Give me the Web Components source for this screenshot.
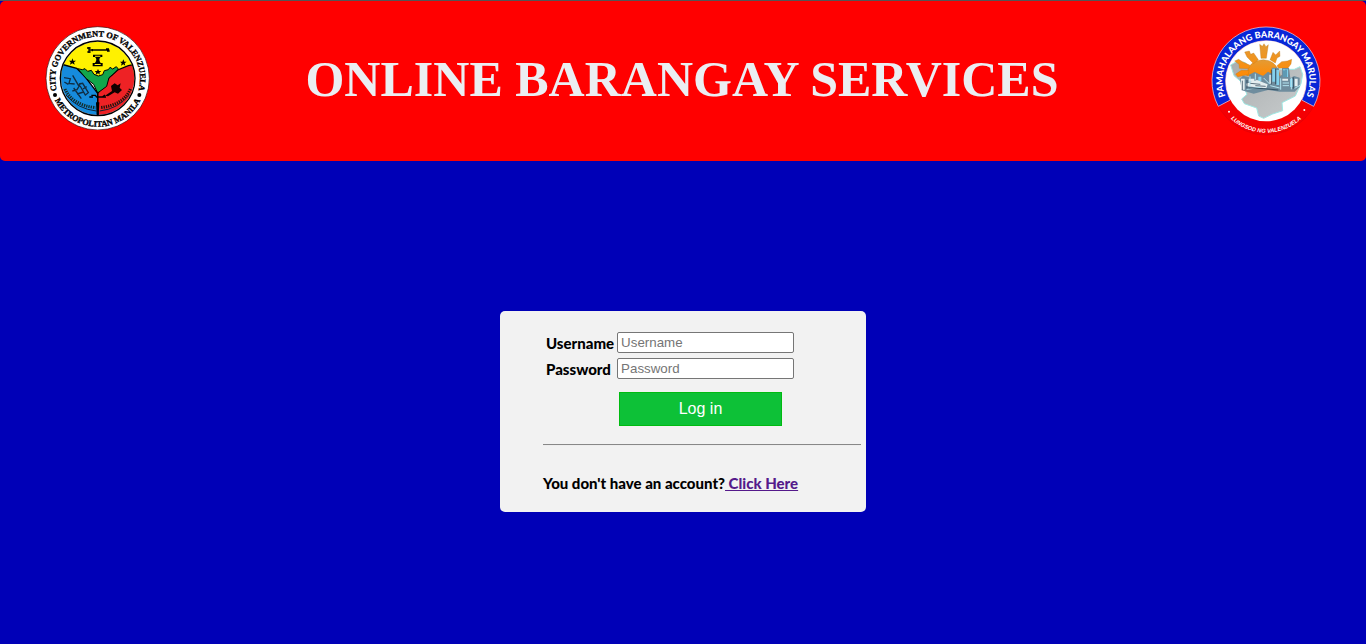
<!DOCTYPE html>
<html lang="en">
<head>
<meta charset="utf-8">
<meta name="viewport" content="width=device-width, initial-scale=1">
<title>Online Barangay Services</title>
<style>
body { margin: 0; min-height: 100vh; box-sizing: border-box; background: #0000b7; border-top: 1px solid #555; font-family: "Liberation Sans", Arial, sans-serif; }
</style>
</head>
<body>
<site-header>
  <city-seal slot="start"></city-seal>
  ONLINE BARANGAY SERVICES
  <barangay-seal slot="end"></barangay-seal>
</site-header>
<page-main>
  <login-card></login-card>
</page-main>

<template id="site-header">
<style>
:host { display: block; }
header { display: grid; grid-template-columns: 108px 1fr 110px; align-items: start; min-height: 160px; box-sizing: border-box; padding: 25px 45px; background: #f00; border-radius: 5px; }
h1 { margin: 25px 0 0; text-align: center; font: bold 50px/56px "Liberation Serif", "Times New Roman", serif; color: #ebeef2; }
.end { justify-self: end; }
</style>
<header>
  <div><slot name="start"></slot></div>
  <h1><slot></slot></h1>
  <div class="end"><slot name="end"></slot></div>
</header>
</template>

<template id="page-main">
<style>
:host { display: block; }
main { display: flex; justify-content: center; padding: 150px 16px 32px; }
</style>
<main><slot></slot></main>
</template>

<template id="login-card">
<style>
:host { display: block; width: 366px; max-width: 100%; }
form { padding: 18px 5px 18px 43px; background: #f2f2f2; border-radius: 5px; color: #000; font: 900 15px/22px Lato, "Liberation Sans", sans-serif; }
table { border-spacing: 2px; }
th, td { padding: 1px; text-align: left; height: 22px; }
td { vertical-align: top; }
th { width: 67px; padding-right: 0; font: inherit; }
input { display: block; box-sizing: border-box; width: 177px; height: 21px; padding: 1px 3px; font-family: "Liberation Sans", Arial, sans-serif; background: #fff; border: 1px solid #767676; border-radius: 2px; }
input::placeholder { color: #757575; }
button { display: block; width: 163px; height: 34px; margin: 9px 0 0 76px; padding: 0; background: #0dc137; border: 1px solid #0b1; color: #fff; font: 16px/20px "Liberation Sans", Arial, sans-serif; }
hr { margin: 18px 0 0; border: 0 solid #888; border-width: 1px 0; border-bottom-color: #eee; height: 0; }
p { margin: 26px 0 0; }
a { color: #551a8b; white-space: pre; }
</style>
<form>
  <table role="presentation">
    <tr><th><label for="user">Username</label></th><td><input id="user" type="text" placeholder="Username"></td></tr>
    <tr><th><label for="pass">Password</label></th><td><input id="pass" type="password" placeholder="Password"></td></tr>
  </table>
  <button type="submit">Log in</button>
  <hr>
  <p>You don't have an account?<a href="#register"> Click Here</a></p>
</form>
</template>

<template id="city-seal">
<style>
:host { display: block; width: 106px; height: 104px; }
svg { display: block; width: 100%; height: 100%; }
text { font: bold 25px "Liberation Serif", serif; fill: #000; stroke: #000; stroke-width: 1px; }
</style>
<svg viewBox="30 33 318 312" role="img" aria-label="City Government of Valenzuela seal">
  <defs>
    <path id="top" d="M66 227A127 127 0 1 1 310 227"/>
    <path id="bottom" d="M59 254A143 143 0 0 0 317 254"/>
    <clipPath id="disc"><circle cx="188" cy="190" r="110"/></clipPath>
  </defs>
  <circle cx="188" cy="190" r="155" fill="#fff" stroke="#300" stroke-width="2"/>
  <g clip-path="url(#disc)">
    <path fill="#fff100" d="M70 70H310V190H70Z"/>
    <path fill="#168bdc" stroke="#000" stroke-width="4" d="M60 145L88 150 125 160 150 185 188 235V310H60Z"/>
    <path fill="#ee2225" stroke="#000" stroke-width="4" d="M315 145L280 152 248 165 222 188 188 235V310H315Z"/>
    <path fill="#12a64b" stroke="#000" stroke-width="3" d="M128 161L142 164 150 161 158 169 169 166 177 178 190 183 203 179 208 167 220 164 225 157 233 162 244 155 250 162 235 177 222 188 215 214 188 234 176 208 154 191Z"/>
    <g fill="none" stroke="#102d43" stroke-width="4">
      <path d="M87 188L106 191 102 205 119 207M113 181L132 214M116 219L139 251M112 228L126 224 138 204M126 237L146 231M132 207L151 240 160 233 143 205 132 207M144 222L155 215M88 201L100 208"/>
    </g>
    <path fill="none" stroke="#142b25" stroke-width="9" stroke-dasharray="4 3" d="M90 222Q112 270 182 278"/>
    <path fill="none" stroke="#24120a" stroke-width="9" stroke-dasharray="4 3" d="M286 222Q266 270 195 278"/>
    <path fill="none" stroke="#123" stroke-width="3" d="M93 240Q128 282 184 288M283 240Q248 282 194 288"/>
    <path fill="#100" d="M239 205L248 211 257 205 254 218 261 225 249 236 239 232 219 244 210 242 231 228 228 213Z"/>
    <path fill="none" stroke="#000" stroke-width="4" d="M188 230V302M169 241H181L185 246H202L210 240M163 246H174M202 246H213"/>
    <path d="M183 262H193L191 302H185Z"/>
  </g>
  <circle cx="188" cy="190" r="112" fill="none" stroke="#000" stroke-width="4"/>
  <path fill="none" stroke="#000" stroke-width="4" d="M162 96V114M156 99H167M157 111H167M164 105H223M172 102V109M213 102H222M216 108H224"/>
  <path d="M174 119H202V126H197Q189 134 197 144H203V154H173V144H180Q188 134 180 126H174Z"/>
  <path fill="#fff100" d="M180 122H196V125H180ZM179 147H197V150H179Z"/>
  <path d="M112 130L115 137 123 137 117 142 119 149 112 145 105 149 107 142 102 137 110 137ZM265 133L268 140 275 140 269 145 271 152 265 148 258 152 260 145 255 140 262 140ZM189 162L192 168 199 168 193 173 195 179 189 175 182 179 184 173 179 168 186 168Z"/>
  <circle cx="60" cy="240" r="6"/><circle cx="313" cy="240" r="6"/>
  <text><textPath href="#top" startOffset="50%" text-anchor="middle">CITY GOVERNMENT OF VALENZUELA</textPath></text>
  <text><textPath href="#bottom" startOffset="50%" text-anchor="middle">METROPOLITAN MANILA</textPath></text>
</svg>
</template>

<template id="barangay-seal">
<style>
:host { display: block; width: 110px; height: 110px; }
svg { display: block; width: 100%; height: 100%; }
text { fill: #fff; }
.name { font: 900 27px Lato, "Liberation Sans", sans-serif; }
.city { font: italic bold 17px "Liberation Sans", sans-serif; }
</style>
<svg viewBox="32 32 330 330" role="img" aria-label="Pamahalaang Barangay Marulas seal">
  <defs>
    <path id="top" d="M87 266A130 130 0 1 1 307 266"/>
    <path id="bottom" d="M71 288A156 156 0 0 0 323 288"/>
    <linearGradient id="land" x2="1" y2="1"><stop stop-color="#a9adae"/><stop offset="1" stop-color="#c8cccd"/></linearGradient>
    <linearGradient id="sun" x2="0" y2="1"><stop stop-color="#e39b35"/><stop offset="1" stop-color="#ff8a05"/></linearGradient>
  </defs>
  <circle cx="197" cy="197" r="162" fill="#f40004" stroke="#d00008" stroke-width="1"/>
  <path fill="#0826d7" stroke="#f7dbe7" stroke-width="2" d="M54 273A162 162 0 1 1 340 273L304 254A121 121 0 1 0 90 254Z"/>
  <circle cx="197" cy="197" r="121" fill="#fff"/>
  <path fill="url(#land)" stroke="#9fe9e4" stroke-width="3" d="M91 149L112 137 135 142 154 162H282L299 154 307 177 302 205 285 242 245 262 247 286 217 296 190 309 175 302 169 278 132 265 124 251 140 237 122 199 101 181Z"/>
  <g fill="url(#sun)" stroke="#b97519" stroke-width="1">
    <path d="M139 181Q142 135 189 133Q229 134 240 181Z"/>
    <path d="M178 87L186 93 191 85 197 94 204 88 198 129H182ZM133 110L147 107 151 117 160 113 174 133 160 145 140 125ZM238 107L239 123 230 128 225 143 209 133 218 111 226 119ZM103 137L115 132 126 139 149 150 145 160 117 159 116 147ZM106 176L123 165 146 165 144 178 112 184ZM244 139L261 137 274 132 272 146 263 158 235 159 230 151Z"/>
  </g>
  <path fill="#6f8d9e" d="M119 190L128 181 146 186V178L163 170 188 182 203 169 214 175V157H235L238 183 245 178V158H266L270 188 281 182 298 187V215L283 229H238L203 224 160 235 124 225Z"/>
  <path fill="#82d0ec" d="M216 160H225V199H216ZM228 164H236V209H228ZM248 162H263V185H248ZM174 184H183V198H174ZM269 190H277V215H269Z"/>
  <path fill="#e4eef0" d="M122 190H133V223H122ZM145 190H162V199H145ZM137 205L170 194 202 207 198 219 139 213ZM246 190H263V196H246ZM283 190H292V213H283ZM207 178H213V205H207Z"/>
  <path fill="none" stroke="#b5e5f2" stroke-width="3" d="M149 183V214M165 175V193M190 188L208 206M241 189V223M210 211L238 218M247 203H266M247 211H266M273 187V222M139 222L182 216M283 219L299 210"/>
  <path fill="none" stroke="#162f42" stroke-width="2" d="M126 196V224M140 194V220M213 163V207M226 160V207M251 165V185M257 163V185M279 186V220M144 218L190 220 234 224M150 204L180 207M165 211L196 213"/>
  <circle cx="86" cy="289" r="3" fill="#fff"/><circle cx="312" cy="284" r="3" fill="#fff"/>
  <text class="name"><textPath href="#top" startOffset="50%" text-anchor="middle">PAMAHALAANG BARANGAY MARULAS</textPath></text>
  <text class="city"><textPath href="#bottom" startOffset="50%" text-anchor="middle">LUNGSOD NG VALENZUELA</textPath></text>
</svg>
</template>

<script>
class TemplateElement extends HTMLElement {
  constructor() {
    super();
    const template = document.getElementById(this.localName);
    this.attachShadow({ mode: "open" }).append(template.content.cloneNode(true));
  }
}
customElements.define("site-header", class SiteHeader extends TemplateElement {});
customElements.define("page-main", class PageMain extends TemplateElement {});
customElements.define("city-seal", class CitySeal extends TemplateElement {});
customElements.define("barangay-seal", class BarangaySeal extends TemplateElement {});
customElements.define("login-card", class LoginCard extends TemplateElement {
  constructor() {
    super();
    this.shadowRoot.querySelector("form").addEventListener("submit", event => event.preventDefault());
  }
});
</script>
</body>
</html>
